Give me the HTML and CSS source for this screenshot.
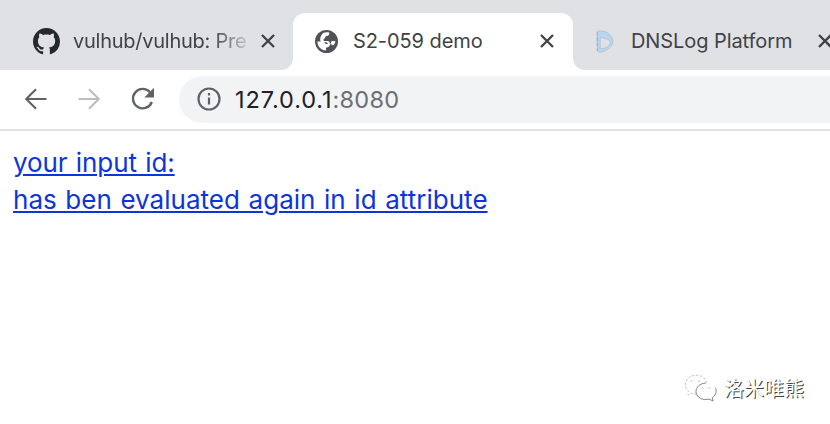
FILE: index.html
```html
<!DOCTYPE html>
<html lang="en">
<head>
<meta charset="utf-8">
<title>S2-059 demo</title>
<link rel="stylesheet" href="styles.css">
</head>
<body>
<header class="browser">
  <nav class="tabs">
    <div class="tab tab-first">
      <svg class="favicon github" viewBox="0 0 16 16"><path fill="#24292e" fill-rule="evenodd" d="M8 0C3.58 0 0 3.58 0 8c0 3.54 2.29 6.53 5.47 7.59.4.07.55-.17.55-.38 0-.19-.01-.82-.01-1.49-2.01.37-2.53-.49-2.69-.94-.09-.23-.48-.94-.82-1.13-.28-.15-.68-.52-.01-.53.63-.01 1.08.58 1.23.82.72 1.21 1.87.87 2.33.66.07-.52.28-.87.51-1.07-1.78-.2-3.64-.89-3.64-3.95 0-.87.31-1.59.82-2.15-.08-.2-.36-1.02.08-2.12 0 0 .67-.21 2.2.82.64-.18 1.32-.27 2-.27s1.36.09 2 .27c1.53-1.04 2.2-.82 2.2-.82.44 1.1.16 1.92.08 2.12.51.56.82 1.27.82 2.15 0 3.07-1.87 3.75-3.65 3.95.29.25.54.73.54 1.48 0 1.07-.01 1.93-.01 2.2 0 .21.15.46.55.38A8.01 8.01 0 0 0 16 8c0-4.42-3.58-8-8-8z"/></svg>
      <span class="title title-fade">vulhub/vulhub: Pre</span>
      <svg class="close" viewBox="0 0 14 14"><path d="M1 1l12 12M13 1L1 13"/></svg>
    </div>
    <div class="tab tab-active">
      <svg class="favicon globe" viewBox="0 0 24 24"><circle cx="12" cy="12" r="12" fill="#505257"/><path fill="#fff" d="M8.500 3.200C10.500 2.300 13 2.200 15 2.800c0 2-.8 3.200-3 3.400-1.600.2-1 2.400-2.600 3.200-.8.5-1 1.800.2 2h3.600c1.700 0 2.200 1.400 2.200 2.900 1.500.3 2.600 1 3.300 2 1.600-1.200 2.500-2.900 2.500-5.100-1.300.6-2.500.6-3.700.1l-1.200 2.900c-.6 2.400-2.400 4.200-4.800 4.200v1.900c0 .6-.5 1-1 1C6 20.600 2.500 16.800 2.500 12h4.300c1.900 0 3.500 1 4.300 2.700h2.200c0-1.300-.8-2-2-2H8.200c-1.700 0-2.800-1-2.800-2.500 0-2.500 1-4.800 3.100-7z"/></svg>
      <span class="title">S2-059 demo</span>
      <svg class="close" viewBox="0 0 14 14"><path d="M1 1l12 12M13 1L1 13"/></svg>
    </div>
    <div class="tab tab-last">
      <svg class="favicon dnslog" viewBox="0 0 18 24"><path fill="#b9d6f0" stroke="#a5b7c7" stroke-width=".6" fill-rule="evenodd" d="M1 1.500C8-.5 17 4 17.300 11.500 17.500 18 9 23.500 3 23 1 22.800.8 21 1.200 19V13l-.4-1zM4 9v10.500C9 20 14.500 16.500 14.500 12.500 14.500 9.500 8 8.500 4 8z"/><path stroke="#8f9da8" stroke-width=".7" stroke-dasharray="4 1.500" d="M.9 2v20"/></svg>
      <span class="title">DNSLog Platform</span>
      <svg class="close" viewBox="0 0 14 14"><path d="M1 1l12 12M13 1L1 13"/></svg>
    </div>
  </nav>
  <div class="toolbar">
    <svg class="nav-icon back" viewBox="0 0 22 22"><path d="M21.500 11H1.500M11 1.200L1.200 11l9.800 9.800"/></svg>
    <svg class="nav-icon forward" viewBox="0 0 22 22"><path d="M.5 11h20M11 1.200l9.800 9.800-9.800 9.800"/></svg>
    <svg class="nav-icon reload" viewBox="0 0 24 24"><path d="M20.800 15A9.700 9.700 0 1 1 19 5.200"/><path class="arrowhead" d="M23 .8v9.700h-9.700z"/></svg>
    <div class="address">
      <svg class="info" viewBox="0 0 24 24"><circle cx="12" cy="12" r="10.500"/><path d="M12 10.500v7M12 6v2.600"/></svg>
      <span class="url">127.0.0.1<span class="port">:8080</span></span>
    </div>
  </div>
</header>
<main class="page">
  <a class="result" href="#"><span class="line-one">your input id:</span><br><span class="line-two">has ben evaluated again in id attribute</span></a>
  <div class="watermark">
    <svg class="chat" viewBox="0 0 34 28"><path d="M12.500 20c-2 .2-3.500 0-5-.6L4 21l.7-3.500C-1 13 .5 3 11 1.200 17 .5 21.500 4 22.500 8.500" stroke-dasharray="2 2"/><path stroke="#666" d="M22 9c-6 .3-10 4-10 8.500 0 6 7 9.500 13 7.500l4 2-.6-3.500C32.500 20.500 33 16 31 13.500"/><path d="M6.500 7.500q1-1.500 2 0M14 7.500q1-1.500 2 0M17.500 14.500q1-1.500 2 0M24.500 14.500q1-1.500 2 0"/></svg>
    <span class="brand" lang="zh">洛米唯熊</span>
  </div>
</main>
</body>
</html>
```
FILE: styles.css
```css
* { box-sizing: border-box; }
body {
  margin: 0;
  width: 830px;
  height: 424px;
  display: flex;
  flex-direction: column;
  overflow: hidden;
  background: #fff;
  font-family: Inter, "Liberation Sans", sans-serif;
}
svg { display: block; flex: none; fill: none; }
.tabs {
  display: grid;
  grid-template-columns: 293px 280px 280px;
  height: 69.500px;
  padding-top: 13px;
  background: #dfe1e5;
  overflow: hidden;
}
.tab { display: flex; align-items: center; position: relative; color: #3f4246; }
.tab-first { padding-left: 33px; }
.tab-active { padding-left: 22px; background: #fff; border-radius: 12px 12px 0 0; }
.tab-last { padding-left: 23px; }
.tab-active::before, .tab-active::after {
  content: "";
  position: absolute;
  bottom: 0;
  width: 12px;
  height: 12px;
}
.tab-active::before { left: -12px; background: radial-gradient(circle at 0 0, transparent 11.500px, #fff 12.500px); }
.tab-active::after { right: -12px; background: radial-gradient(circle at 100% 0, transparent 11.500px, #fff 12.500px); }
.github { width: 27px; height: 27px; margin-right: 13px; }
.globe { width: 23px; height: 23px; margin-right: 15px; }
.dnslog { width: 18px; height: 23px; margin-right: 17px; }
.title { width: 187px; font-size: 20px; line-height: 28px; letter-spacing: -.08px; white-space: nowrap; }
.title-fade {
  width: 174px;
  margin-right: 14px;
  letter-spacing: -.25px;
  -webkit-mask-image: linear-gradient(90deg, #000 138px, transparent 182px);
  mask-image: linear-gradient(90deg, #000 138px, transparent 182px);
}
.close { width: 14px; height: 14px; stroke: #3f4246; stroke-width: 2.300; }
.toolbar { height: 61.500px; display: flex; align-items: center; padding-left: 25px; border-bottom: 2px solid #dfe1e5; }
.nav-icon { width: 22px; height: 22px; stroke: #5f6368; stroke-width: 2.200; }
.forward { margin-left: 31px; stroke: #bcbec0; }
.reload { width: 24px; height: 24px; margin-left: 31px; stroke-width: 2.400; }
.arrowhead { fill: #5f6368; stroke: none; }
.address { flex: 1; height: 47px; display: flex; align-items: center; margin-left: 24px; padding-left: 18px; background: #f1f3f4; border-radius: 24px 0 0 24px; }
.info { width: 24px; height: 24px; stroke: #5f6368; stroke-width: 2.200; }
.url { margin-left: 14px; padding-top: 1px; font-size: 23.500px; line-height: 32px; letter-spacing: .9px; color: #202124; }
.port { letter-spacing: .3px; color: #6c6f73; }
.page { flex: 1; display: flex; flex-direction: column; justify-content: space-between; padding: 14px 26px 18px 13px; }
.result {
  font-size: 26px;
  line-height: 36.500px;
  letter-spacing: .03px;
  word-spacing: 1.200px;
  color: #0c35dc;
  text-decoration-thickness: 1.500px;
  text-underline-offset: 2px;
}
.line-one { letter-spacing: -.1px; }
.watermark { display: flex; align-items: center; align-self: flex-end; gap: 6px; }
.chat { width: 34px; height: 28px; stroke: #aaa; stroke-width: .8; }
.brand { font: 20px/36px "Noto Sans CJK SC", sans-serif; color: #fff; text-shadow: 1px 1px 0 #444; }
```
